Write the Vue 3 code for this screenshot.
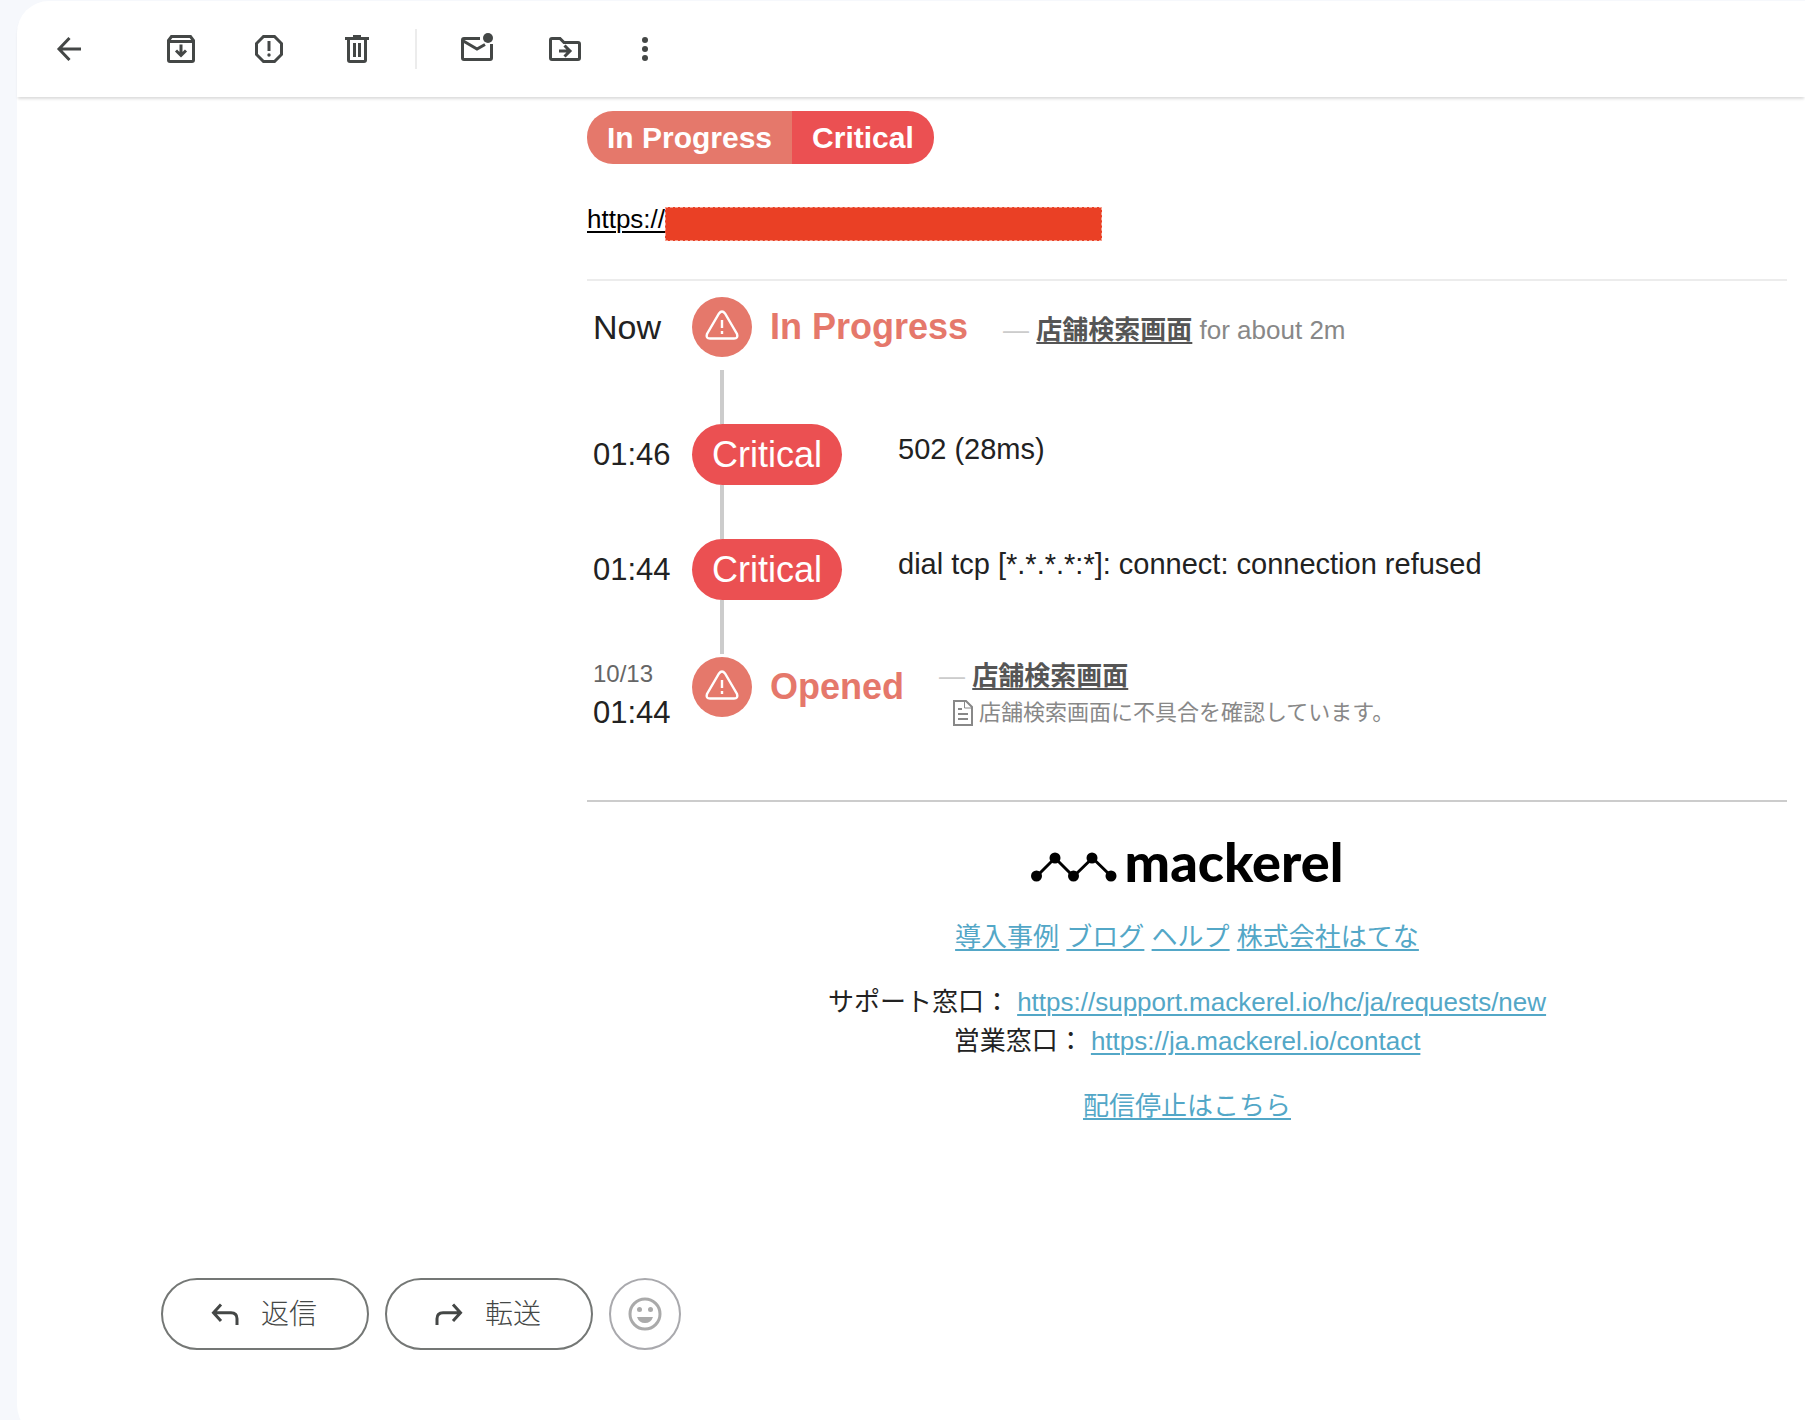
<template>
  <div class="mail-app">
    <main class="mail-panel">
      <div class="toolbar">
        <button class="tool back" aria-label="戻る">
          <svg viewBox="0 0 40 40"><path d="M32 20H11M20.500 9L10 20l10.500 11" /></svg>
        </button>
        <button class="tool" aria-label="アーカイブ">
          <svg viewBox="0 0 40 40">
            <path d="M7.500 11.500l3-4h19l3 4V31q0 1.500-1.500 1.500H9q-1.500 0-1.500-1.500zM7.500 12.500h25" />
            <path d="M20 15.500V26M15 21.500l5 5 5-5" />
          </svg>
        </button>
        <button class="tool" aria-label="迷惑メールを報告">
          <svg viewBox="0 0 40 40">
            <path d="M14.500 7.500h11l7 7v11l-7 7h-11l-7-7v-11z" />
            <path d="M20 12v10" />
            <circle class="solid" cx="20" cy="26" r="1.700" />
          </svg>
        </button>
        <button class="tool" aria-label="削除">
          <svg viewBox="0 0 40 40">
            <path d="M8 9.500h24M16 7.500h8M11.500 10v21q0 1.500 1.500 1.500h14q1.500 0 1.500-1.500V10M17.500 14v14M22.500 14v14" />
          </svg>
        </button>
        <span class="separator"></span>
        <button class="tool" aria-label="未読にする">
          <svg viewBox="0 0 40 40">
            <path d="M23 9.500H7q-1.500 0-1.500 1.500v18q0 1.500 1.500 1.500h26q1.500 0 1.500-1.500V15M5.500 11.500l14.500 8.500 8-4.500" />
            <circle class="solid" cx="31" cy="9" r="5" />
          </svg>
        </button>
        <button class="tool" aria-label="移動">
          <svg viewBox="0 0 40 40">
            <path d="M7 9.500h8l4 4h14q1.500 0 1.500 1.500v14q0 1.500-1.500 1.500H7q-1.500 0-1.500-1.500V11q0-1.500 1.500-1.500z" />
            <path d="M14 22h11M19.500 16.500l5.500 5.500-5.500 5.500" />
          </svg>
        </button>
        <button class="tool more" aria-label="その他">
          <svg viewBox="0 0 24 40">
            <circle class="solid" cx="12" cy="11" r="3" />
            <circle class="solid" cx="12" cy="20" r="3" />
            <circle class="solid" cx="12" cy="29" r="3" />
          </svg>
        </button>
      </div>

      <article class="mail-body">
        <div class="badge">
          <span class="badge-state">In Progress</span>
          <span class="badge-level">Critical</span>
        </div>

        <div class="monitor-url">
          <a href="#">https://</a><span class="masked"></span>
        </div>

        <ol class="timeline">
          <li class="event first">
            <div class="time now">Now</div>
            <span class="marker">
              <svg viewBox="0 0 60 60"><path :d="warningPath" /></svg>
            </span>
            <strong class="state">In Progress</strong>
            <div class="note"><span class="dash">—</span> <a href="#">店舗検索画面</a> for about 2m</div>
          </li>
          <li v-for="check in checks" :key="check.time" class="event check">
            <div class="time">{{ check.time }}</div>
            <span class="pill">{{ check.level }}</span>
            <div class="message">{{ check.message }}</div>
          </li>
          <li class="event opened">
            <div class="time">
              <div class="date">10/13</div>
              <div>01:44</div>
            </div>
            <span class="marker">
              <svg viewBox="0 0 60 60"><path :d="warningPath" /></svg>
            </span>
            <strong class="state">Opened</strong>
            <div class="note">
              <div><span class="dash">—</span> <a href="#">店舗検索画面</a></div>
              <div class="memo">
                <svg viewBox="0 0 20 26">
                  <path d="M1 1h12l6 6v18H1z" stroke-width="2" />
                  <path d="M11.500 1.500V8H18.500" stroke-width="1" />
                  <path d="M5 9h4M5 14h10M5 19h10" stroke-width="2" />
                </svg>
                <span>店舗検索画面に不具合を確認しています。</span>
              </div>
            </div>
          </li>
        </ol>

        <footer class="mail-footer">
          <div class="logo">
            <svg viewBox="0 0 86 30">
              <path d="M5.500 24.500L24 6l18.500 18.500L61.500 6l19 18.500" />
              <circle cx="5.500" cy="24" r="5.500" />
              <circle cx="24" cy="6" r="5.500" />
              <circle cx="42.500" cy="24" r="5.500" />
              <circle cx="61" cy="6" r="5.500" />
              <circle cx="80" cy="24" r="5.500" />
            </svg>
            <span>mackerel</span>
          </div>
          <p>
            <template v-for="link in links" :key="link"><a href="#">{{ link }}</a>{{ ' ' }}</template>
          </p>
          <p>
            サポート窓口： <a href="#">https://support.mackerel.io/hc/ja/requests/new</a><br>
            営業窓口： <a href="#">https://ja.mackerel.io/contact</a>
          </p>
          <p><a href="#">配信停止はこちら</a></p>
        </footer>
      </article>

      <div class="actions">
        <button class="action">
          <svg viewBox="0 0 40 40"><path d="M8.500 18.700H26q6 0 6 6V31M16 10.500l-7.500 8.200 7.500 8.200" /></svg>
          返信
        </button>
        <button class="action">
          <svg viewBox="0 0 40 40"><path d="M31.500 18.700H14q-6 0-6 6V31M24 10.500l7.500 8.200-7.500 8.200" /></svg>
          転送
        </button>
        <button class="action emoji" aria-label="リアクションを追加">
          <svg viewBox="0 0 40 40">
            <circle cx="20" cy="20" r="15" />
            <circle class="solid" cx="14.500" cy="15.500" r="2.500" />
            <circle class="solid" cx="25.500" cy="15.500" r="2.500" />
            <path class="solid" d="M12 23h16q-2 6-8 6t-8-6z" />
          </svg>
        </button>
      </div>
    </main>
  </div>
</template>

<script setup>
const checks = [
  { time: "01:46", level: "Critical", message: "502 (28ms)" },
  { time: "01:44", level: "Critical", message: "dial tcp [*.*.*.*:*]: connect: connection refused" }
];

const links = ["導入事例", "ブログ", "ヘルプ", "株式会社はてな"];

const warningPath =
  "M27 16.500q3-4 6 0l12 20.500q1.500 4.500-3 4.500H18q-4.500 0-3-4.500zM30 23v8M30 34v3";
</script>

<style>
body {
  margin: 0;
  background-color: #f6f8fc;
}
</style>

<style scoped>
.mail-app {
  height: 100vh;
  overflow: hidden;
  padding: 1px 0 0 17px;
  box-sizing: border-box;
  font-family: "Liberation Sans", "Noto Sans CJK JP", sans-serif;
  font-size: 26px;
  line-height: 39px;
  color: #222;
}

.mail-panel {
  min-height: calc(100vh + 16px);
  background-color: white;
  border-radius: 32px 0 0 32px;
}

button {
  padding: 0;
  border: none;
  background: none;
  font: inherit;
  cursor: pointer;
}

svg {
  display: block;
  flex: none;
  fill: none;
}

/* Toolbar */
.toolbar {
  display: flex;
  align-items: center;
  height: 96px;
  padding-left: 32px;
  border-top-left-radius: 32px;
  box-shadow: 0 3px 3px -1px rgba(0, 0, 0, 0.14);
}

.tool {
  width: 40px;
  height: 40px;
  color: #444746;
}

.tool + .tool {
  margin-left: 48px;
}

.tool.back + .tool {
  margin-left: 72px;
}

.tool.more {
  width: 24px;
}

.tool svg {
  height: 40px;
  stroke: currentColor;
  stroke-width: 3;
}

.solid {
  fill: currentColor;
  stroke: none;
}

.separator {
  width: 2px;
  height: 40px;
  margin: 0 40px 0 38px;
  background-color: #ececec;
}

/* Mail */
.mail-body {
  padding: 14px 18px 0 570px;
}

.badge {
  display: flex;
  width: fit-content;
  border-radius: 26px;
  overflow: hidden;
  font-size: 30px;
  font-weight: bold;
  line-height: 53px;
  color: white;
}

.badge span {
  padding: 0 20px;
}

.badge-state {
  background-color: #e5786b;
}

.badge-level {
  background-color: #eb5052;
}

.monitor-url {
  display: flex;
  align-items: flex-start;
  margin-top: 36px;
  padding-bottom: 38px;
  border-bottom: 2px solid #ececec;
}

.monitor-url a {
  color: black;
}

.masked {
  width: 437px;
  height: 34px;
  margin-top: 7px;
  box-sizing: border-box;
  border: 1px dashed #f6a08f;
  background-color: #ea4025;
}

a {
  text-decoration-thickness: 2px;
  text-underline-offset: 3px;
}

/* Timeline */
.timeline {
  margin: 0;
  padding: 16px 0 0;
  list-style: none;
}

.event {
  display: grid;
  grid-template-columns: 105px auto auto 1fr;
  align-items: center;
}

.event.first {
  padding-bottom: 13px;
}

.event.check::before,
.event.opened::before {
  content: "";
  grid-column: 1 / -1;
  width: 4px;
  height: 54px;
  margin-left: 133px;
  background-color: #ccc;
}

.time {
  padding-left: 6px;
  font-size: 31px;
  line-height: 39px;
}

.time.now {
  font-size: 34px;
}

.date {
  font-size: 24px;
  color: #666;
}

.marker {
  width: 60px;
  height: 60px;
  border-radius: 50%;
  background-color: #e5786b;
}

.marker svg {
  stroke: white;
  stroke-width: 2.4;
}

.state {
  padding-left: 18px;
  font-size: 36px;
  line-height: 60px;
  color: #e5786b;
}

.note {
  padding-left: 35px;
  color: #888;
}

.first .state,
.first .note {
  align-self: baseline;
}

.note a {
  font-weight: bold;
  color: #555;
}

.dash {
  color: #ccc;
}

.pill {
  padding: 0 20px;
  border-radius: 31px;
  background-color: #eb5052;
  font-size: 36px;
  line-height: 61px;
  color: white;
}

.message {
  align-self: start;
  padding-left: 56px;
  font-size: 29px;
  line-height: 50px;
}

.event.opened {
  align-items: start;
}

.opened .marker,
.opened .state,
.opened .note {
  margin-top: 3px;
}

.memo {
  display: flex;
  align-items: center;
  gap: 6px;
  padding-left: 14px;
  font-size: 22px;
  line-height: 34px;
}

.memo svg {
  width: 20px;
  height: 26px;
  stroke: #888;
}

/* Footer */
.mail-footer {
  margin-top: 68px;
  padding-top: 30px;
  border-top: 2px solid #ccc;
  text-align: center;
}

.mail-footer p {
  margin: 26px 0 0;
}

.mail-footer a {
  color: #53a7c7;
}

.logo {
  display: flex;
  justify-content: center;
  align-items: center;
  gap: 8px;
  font-family: Lato, sans-serif;
  font-size: 54px;
  font-weight: 900;
  line-height: 60px;
  color: black;
}

.logo svg {
  width: 86px;
  height: 30px;
  margin-top: 10px;
  fill: black;
}

.logo path {
  fill: none;
  stroke: black;
  stroke-width: 3;
}

/* Reply buttons */
.actions {
  display: flex;
  gap: 16px;
  margin-top: 152px;
  padding-left: 144px;
}

.action {
  display: flex;
  align-items: center;
  gap: 16px;
  height: 72px;
  padding: 0 50px 0 42px;
  border: 2px solid #747775;
  border-radius: 36px;
  font-size: 28px;
  font-weight: 300;
  color: #444746;
}

.action svg {
  width: 40px;
  height: 40px;
  stroke: currentColor;
  stroke-width: 3;
}

.action.emoji {
  justify-content: center;
  width: 72px;
  padding: 0;
  border-color: #a9a9ad;
  color: #aaa;
}
</style>
